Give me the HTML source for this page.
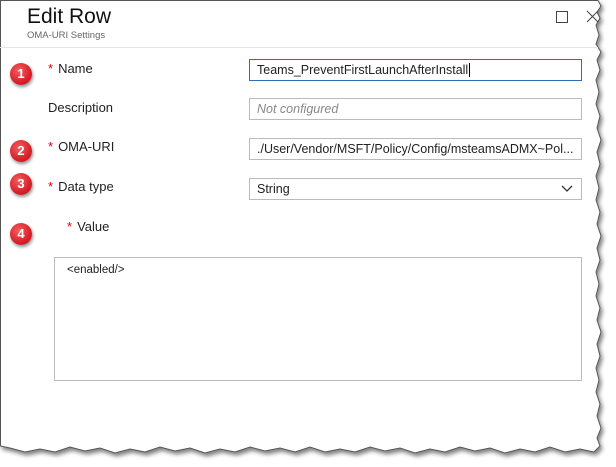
<!DOCTYPE html>
<html><head><style>
body{margin:0;width:616px;height:467px;background:#fff;position:relative;overflow:hidden;font-family:"Segoe UI","Liberation Sans",sans-serif;}
.a{position:absolute}
.lbl{position:absolute;font-size:13px;color:#222}
.st{color:#e00000;margin-right:5px}
.inp{position:absolute;left:249px;width:324px;height:20px;border:1px solid #bbb;font-size:12.5px;line-height:20px;padding-left:7px;box-sizing:content-box;color:#222;white-space:nowrap;overflow:hidden}
.b{position:absolute;width:22px;height:22px;border-radius:50%;background:radial-gradient(circle at 40% 35%,#f26060,#d8202a 60%,#b01018);color:#fff;font-size:13px;font-weight:bold;text-align:center;line-height:22px;box-shadow:1px 2px 3px rgba(0,0,0,.45)}
</style></head><body>
<svg class="a" style="left:0;top:0" width="616" height="467">
<defs><filter id="s" x="-5%" y="-5%" width="110%" height="110%"><feDropShadow dx="2" dy="3" stdDeviation="2" flood-color="#000" flood-opacity=".5"/></filter></defs>
<path filter="url(#s)" fill="#fff" stroke="#555" stroke-width="1" d="M0.5,0.5 L598,0.5 L601,6 L597,12 L600,18 L596,25 L599,35 L596,44 L601,52 L597,60 L600,70 L596,80 L599,92 L596,104 L600,116 L597,128 L601,140 L597,152 L600,164 L596,176 L599,188 L596,200 L600,212 L597,224 L601,236 L597,248 L600,260 L596,272 L599,284 L596,296 L600,308 L597,320 L601,332 L597,344 L600,356 L596,368 L599,380 L596,392 L600,404 L597,416 L601,428 L597,438 L600,446 L594,452 L580,449 L565,452 L550,447 L535,452 L520,449 L505,453 L490,448 L475,451 L460,447 L445,452 L430,449 L415,453 L400,448 L385,451 L370,447 L355,452 L340,449 L325,452 L310,447 L295,452 L280,448 L265,451 L250,447 L235,452 L220,449 L205,453 L190,448 L175,451 L160,447 L145,452 L130,449 L115,453 L100,448 L85,451 L70,447 L55,452 L40,449 L25,452 L10,448 L0.5,446 Z"/>
<line x1="0" y1="47.5" x2="598" y2="47.5" stroke="#e6e6e6"/>
<rect x="556.5" y="11.5" width="11" height="11" fill="none" stroke="#444"/>
<path d="M587,11 L598,22 M598,11 L587,22" stroke="#444"/>
</svg>
<div class="a" style="left:27px;top:5px;font-size:21px;color:#111">Edit Row</div>
<div class="a" style="left:27px;top:30px;font-size:9.5px;color:#666">OMA-URI Settings</div>

<div class="b" style="left:10px;top:63px">1</div>
<div class="b" style="left:10px;top:140px">2</div>
<div class="b" style="left:10px;top:173px">3</div>
<div class="b" style="left:10px;top:223px">4</div>

<div class="lbl" style="left:48px;top:61px"><span class="st">*</span>Name</div>
<div class="lbl" style="left:48px;top:100px">Description</div>
<div class="lbl" style="left:48px;top:139px"><span class="st">*</span>OMA-URI</div>
<div class="lbl" style="left:48px;top:179px"><span class="st">*</span>Data type</div>
<div class="lbl" style="left:67px;top:219px"><span class="st">*</span>Value</div>

<div class="inp" style="top:59px;border-color:#2a6fb8">Teams_PreventFirstLaunchAfterInstall<span style="border-left:1px solid #000;margin-left:1px"></span></div>
<div class="inp" style="top:98px;color:#888;font-style:italic">Not configured</div>
<div class="inp" style="top:138px">./User/Vendor/MSFT/Policy/Config/msteamsADMX~Pol...</div>
<div class="inp" style="top:178px">String<svg class="a" style="right:8px;top:6px" width="12" height="8"><path d="M1,1 L6,6 L11,1" fill="none" stroke="#333" stroke-width="1.3"/></svg></div>

<div class="a" style="left:54px;top:257px;width:528px;height:124px;border:1px solid #bbb;font-size:11.5px;color:#222;padding:6px 0 0 12px;box-sizing:border-box">&lt;enabled/&gt;</div>
</body></html>
